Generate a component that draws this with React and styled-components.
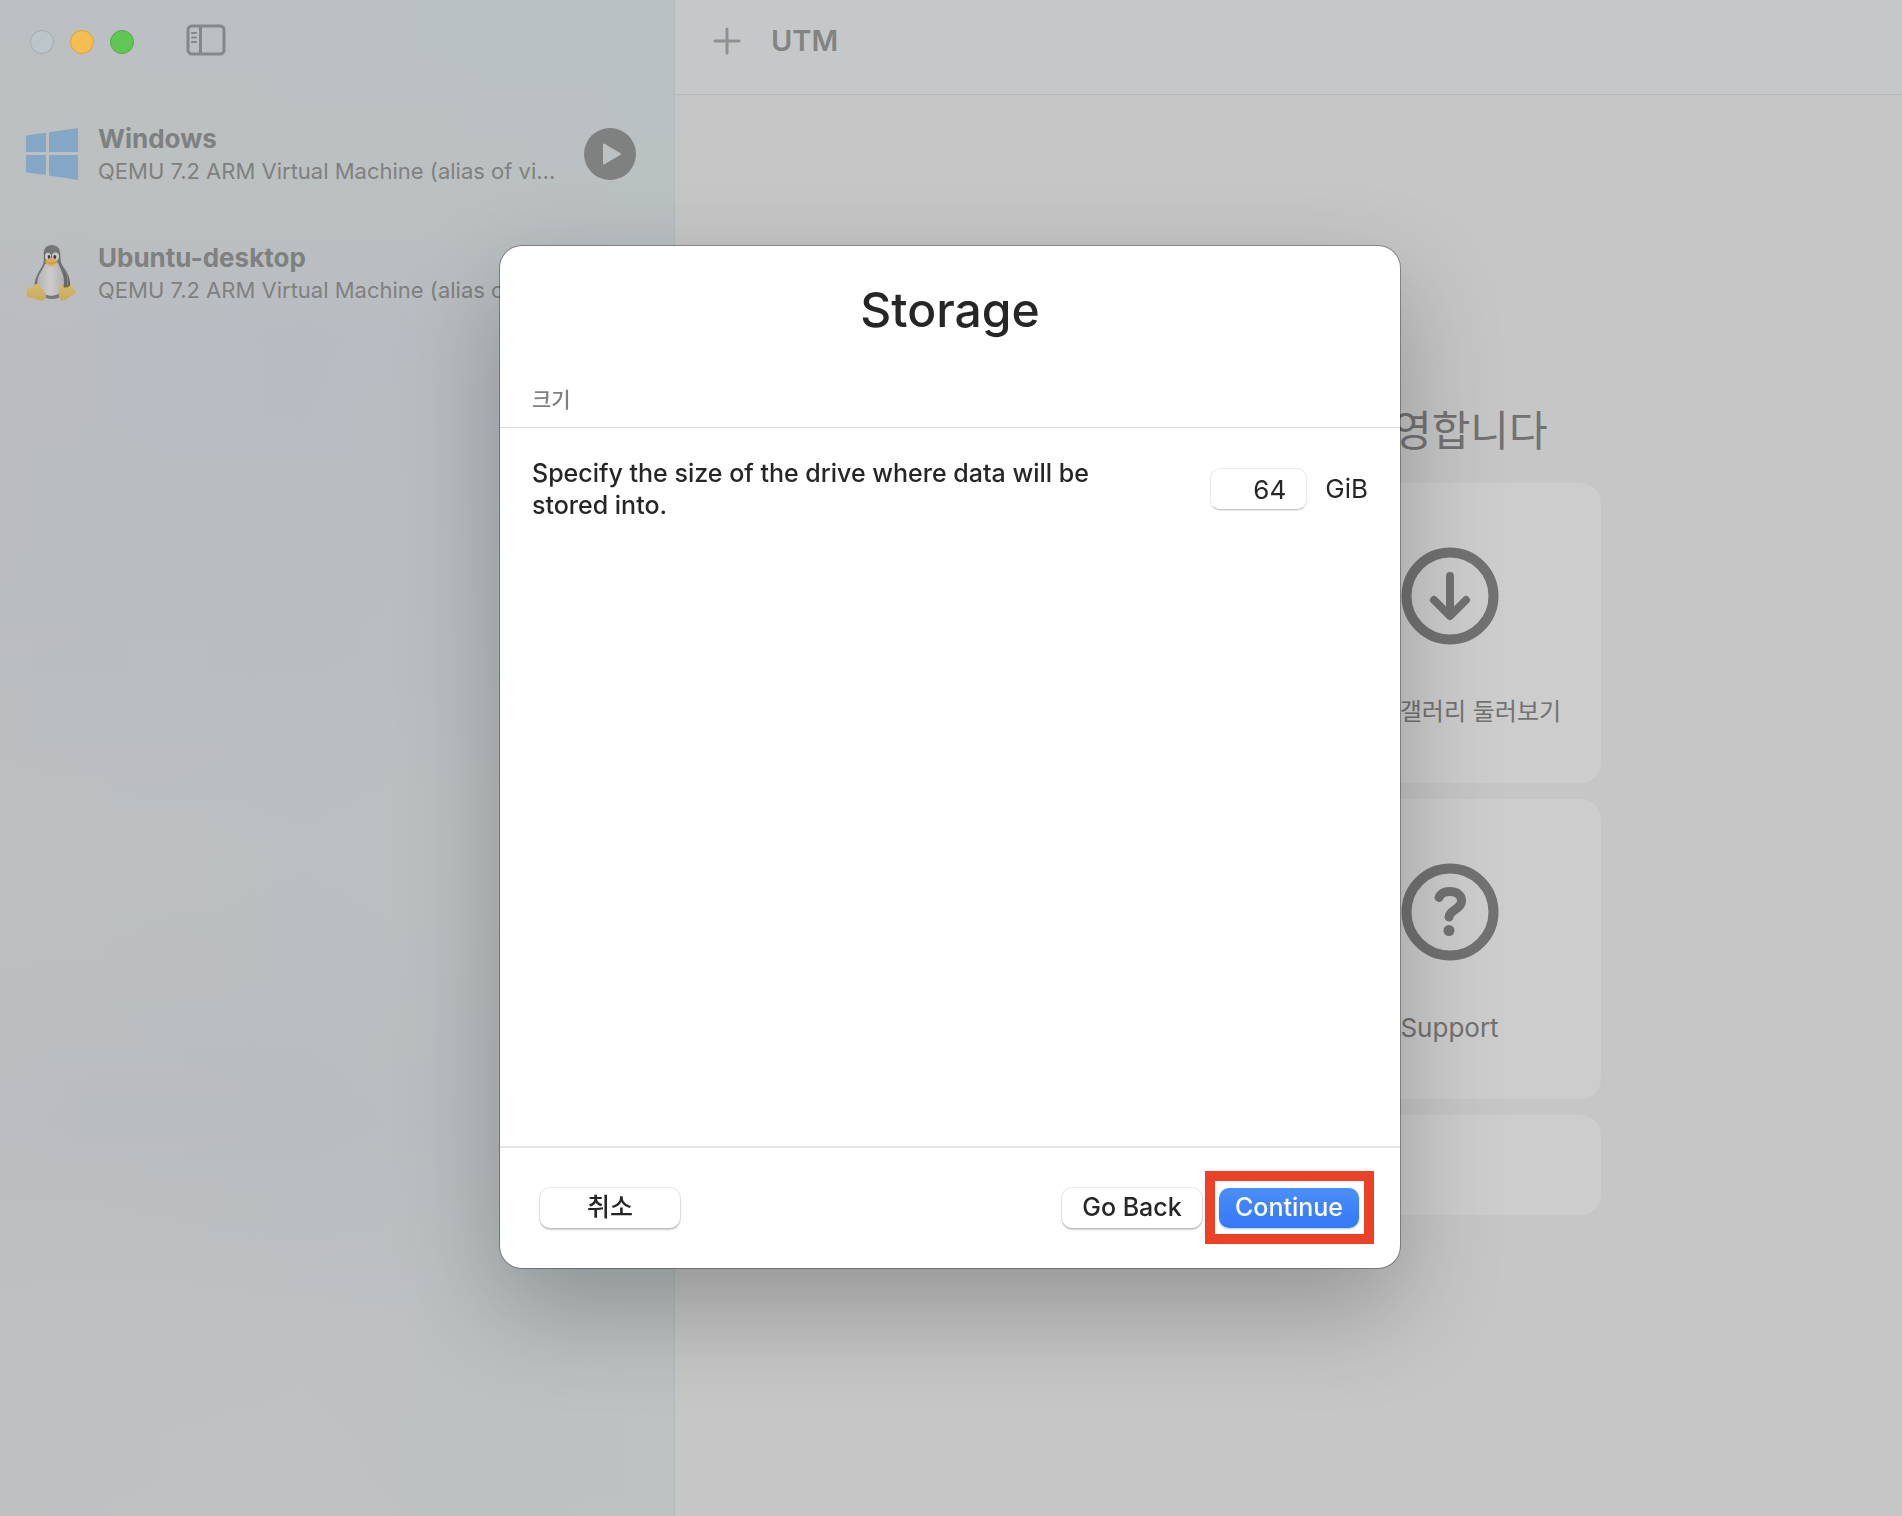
import React from 'react';
import styled, { createGlobalStyle } from 'styled-components';

const GlobalStyle = createGlobalStyle`
  * {
    box-sizing: border-box;
  }

  body {
    margin: 0;
    background: #c6c6c6;
    font-family: Inter, "Noto Sans CJK KR", sans-serif;
  }

  h1, h2, h3, p, ul {
    margin: 0;
    padding: 0;
    font-weight: 400;
  }

  button, input {
    font-family: inherit;
  }
`;

const Window = styled.div`
  display: grid;
  grid-template-columns: minmax(320px, 675px) 1fr;
  min-height: 100vh;
`;

/* sidebar */

const Sidebar = styled.aside`
  min-width: 0;
  border-right: 1px solid #b3b9bc;
  background:
    linear-gradient(
      90deg,
      rgba(192, 190, 190, 0.25) 0%,
      rgba(186, 194, 196, 0) 45%,
      rgba(186, 194, 195, 0.5) 100%
    ),
    linear-gradient(
      180deg,
      #bac0c3 0%,
      #bbc0c0 13%,
      #b8bcc2 22%,
      #b8bdc1 40%,
      #bcbfc1 56%,
      #b9bdc0 74%,
      #bec0c2 88%,
      #bfc1c2 100%
    );
`;

const TitleBar = styled.div`
  display: flex;
  align-items: center;
  height: 84px;
  padding-left: 30px;
`;

const Lights = styled.div`
  display: flex;
  gap: 16px;
`;

const Light = styled.button`
  width: 24px;
  height: 24px;
  padding: 0;
  border: 1px solid ${(props) => props.$edge};
  border-radius: 50%;
  background: ${(props) => props.$fill};
`;

const IconButton = styled.button`
  display: flex;
  padding: 0;
  border: none;
  background: none;
  color: ${(props) => props.$color || '#83898b'};
`;

const ToggleButton = styled(IconButton)`
  margin: 0 0 4px 52px;
`;

const MachineList = styled.ul`
  display: flex;
  flex-direction: column;
  gap: 39px;
  padding: 30px 38px 0 24px;
  list-style: none;
`;

const Machine = styled.li`
  display: flex;
  align-items: center;
  height: 80px;
`;

const MachineText = styled.div`
  flex: 1;
  min-width: 0;
  margin: 0 26px 0 18px;
  padding-top: 2px;
  color: #7f8180;
`;

const MachineName = styled.h3`
  font-size: 26px;
  font-weight: 700;
  line-height: 32px;
`;

const MachineInfo = styled.p`
  overflow: hidden;
  font-size: 22px;
  line-height: 32px;
  white-space: nowrap;
  text-overflow: ellipsis;
`;

/* main area */

const Main = styled.main`
  display: flex;
  flex-direction: column;
  min-width: 0;
`;

const Toolbar = styled.header`
  display: flex;
  align-items: center;
  gap: 30px;
  height: 95px;
  padding: 0 38px 12px;
  border-bottom: 1px solid #b5b8bb;
  background: #c6c7c9;
`;

const WindowTitle = styled.h2`
  font-size: 29px;
  font-weight: 600;
  line-height: 36px;
  color: #828483;
`;

const Welcome = styled.section`
  width: 100%;
  max-width: 624px;
  margin: 0 auto;
  padding-top: 303px;
  color: #727272;
`;

const WelcomeTitle = styled.h1`
  margin-bottom: 20px;
  font-size: 42px;
  line-height: 65px;
  text-align: center;
  white-space: nowrap;
`;

const CardGrid = styled.div`
  display: grid;
  grid-template-columns: 1fr 1fr;
  gap: 16px 20px;
`;

const Card = styled.button`
  display: flex;
  flex-direction: column;
  align-items: center;
  justify-content: space-between;
  height: 300px;
  padding: 64px 0 55px;
  border: none;
  border-radius: 20px;
  background: #cdcdcd;
  color: #727272;
  font-size: ${(props) => props.$size || 24}px;
  line-height: 32px;
`;

const WideCard = styled(Card)`
  grid-column: 1 / -1;
  height: 100px;
  padding: 0;
`;

/* storage sheet */

const Backdrop = styled.div`
  position: fixed;
  inset: 0;
  display: flex;
  justify-content: center;
  align-items: flex-start;
  padding: 246px 2px 0 0;
`;

const Sheet = styled.div`
  display: flex;
  flex-direction: column;
  width: 900px;
  min-height: 1022px;
  border-radius: 22px;
  background: #ffffff;
  color: #262626;
  box-shadow:
    0 0 0 1px rgba(0, 0, 0, 0.3),
    0 40px 100px rgba(0, 0, 0, 0.25);
`;

const SheetTitle = styled.h2`
  padding: 32px 0 44px;
  font-size: 48px;
  font-weight: 500;
  line-height: 64px;
  text-align: center;
`;

const SectionLabel = styled.h3`
  padding: 0 32px 13px;
  border-bottom: 1px solid #dcdcdc;
  font-size: 21px;
  font-weight: 500;
  line-height: 28px;
  color: #808080;
`;

const SizeRow = styled.div`
  display: flex;
  align-items: center;
  gap: 18px;
  padding: 29px 32px;
  font-size: 26px;
  line-height: 32px;
`;

const SizeLabel = styled.label`
  flex: 1;
  padding-right: 60px;
  font-size: 25px;
  font-weight: 500;
`;

const SizeInput = styled.input`
  width: 97px;
  height: 42px;
  padding: 0 20px;
  border: 1px solid #ebebeb;
  border-bottom-color: #c9c9c9;
  border-radius: 10px;
  outline: none;
  background: #ffffff;
  color: inherit;
  font-size: 26px;
  text-align: right;
  box-shadow: 0 1px 1px rgba(0, 0, 0, 0.1);
`;

const SheetFooter = styled.footer`
  display: flex;
  align-items: center;
  gap: 17px;
  height: 122px;
  margin-top: auto;
  padding: 0 41px 0 40px;
  border-top: 2px solid #e5e5e5;
`;

const PushButton = styled.button`
  width: 140px;
  height: 40px;
  padding: 0 0 2px;
  border: none;
  border-radius: 10px;
  background: ${(props) =>
    props.$primary ? 'linear-gradient(#4a8ff8, #3478f6)' : '#ffffff'};
  color: ${(props) => (props.$primary ? '#ffffff' : '#262626')};
  font-size: 25px;
  font-weight: 500;
  line-height: 36px;
  white-space: nowrap;
  box-shadow: ${(props) =>
    props.$primary
      ? '0 1px 2px rgba(52, 120, 246, 0.4)'
      : '0 0 0 1px rgba(0, 0, 0, 0.08), 0 2px 2px rgba(0, 0, 0, 0.2)'};
`;

const Spacer = styled.div`
  flex: 1;
`;

const Highlight = styled.div`
  position: relative;
  display: flex;

  &::after {
    content: '';
    position: absolute;
    inset: -17px -15px -16px -14px;
    border: 10px solid #ea4127;
    pointer-events: none;
  }
`;

function SidebarIcon() {
  return (
    <svg width="40" height="32" viewBox="0 0 40 32" fill="none" stroke="currentColor" strokeLinecap="round">
      <rect x="2" y="2" width="36" height="28" rx="4" strokeWidth="3" />
      <path d="M14.5 2v28" strokeWidth="3" strokeLinecap="butt" />
      <path d="M6 9h4M6 13.500h4M6 18h4" strokeWidth="2" />
    </svg>
  );
}

function PlusIcon() {
  return (
    <svg width="28" height="28" viewBox="0 0 28 28" stroke="currentColor" strokeWidth="3" strokeLinecap="round">
      <path d="M14 2v24M2 14h24" />
    </svg>
  );
}

function WindowsLogo() {
  return (
    <svg width="56" height="52" viewBox="0 0 56 52" fill="#84a7c6">
      <path d="M2 7.500l20-2.800V24H2zM25 4.300L54 0v24H25zM2 27h20v20L2 44.500zM25 27h29v25l-29-4.500z" />
    </svg>
  );
}

function TuxLogo() {
  return (
    <svg width="56" height="58" viewBox="0 0 56 58">
      <defs>
        <linearGradient id="belly" x1="0" x2="1">
          <stop offset="0" stopColor="#b4b4b4" />
          <stop offset="0.5" stopColor="#cbcbcb" />
          <stop offset="1" stopColor="#b0b0b0" />
        </linearGradient>
        <linearGradient id="coat" x1="0" x2="1">
          <stop offset="0" stopColor="#6d6f70" />
          <stop offset="0.6" stopColor="#777979" />
          <stop offset="1" stopColor="#606262" />
        </linearGradient>
        <linearGradient id="foot" x1="0" y1="0" x2="0" y2="1">
          <stop offset="0" stopColor="#d6b968" />
          <stop offset="1" stopColor="#c8a963" />
        </linearGradient>
      </defs>
      <path
        d="M28 1c-6 0-8.500 4-8.300 9.500.2 5 .6 8-2 12.500C14 29 11 34 10.500 41c3 8 9 14 18 14 8 0 15-5 17.500-12 .8-7-2-14-6.500-20-3-4-3-8-3.200-13C36 4.500 33.500 1 28 1z"
        fill="url(#coat)"
      />
      <path
        d="M21 20c-1 4-6 9-7.500 16-1 5 1 9 4.500 12 4.500 5 14 5 19 0 3.500-4 3.500-12 2-17-1-4-4-9-5-12z"
        fill="url(#belly)"
      />
      <path d="M39 23c4 5 5.500 12 4.500 19" fill="none" stroke="#8b8d8e" strokeWidth="1" />
      <ellipse cx="24" cy="12.500" rx="3" ry="3.800" fill="#c8c8c8" />
      <ellipse cx="31.500" cy="12.500" rx="3.500" ry="4" fill="#c8c8c8" />
      <ellipse cx="25" cy="13" rx="1.300" ry="1.900" fill="#3f4142" />
      <ellipse cx="30.800" cy="13" rx="1.500" ry="2" fill="#3f4142" />
      <path d="M21 17.500c2-1.500 4-3.500 6.500-3.500s5 2 6.500 3.200c-1.500 3-4.500 5.300-7 5.300-2.300 0-5-2.300-6-5z" fill="#dcae58" />
      <path d="M22 18c4 2 8 1.500 11.500-.5" fill="none" stroke="#b88b45" strokeWidth="0.800" />
      <path
        d="M12 40c2.500-.7 4 1.300 6 4.500 1.500 2.500 4.500 5 4 8-.4 3-3.500 4.500-6.500 4-4-1-7-3-11-3.300-2-.3-2.400-2-1.800-4 .4-2-.5-4 .7-5 1.500-1 3.600-.2 5-1.200 1.300-.8 1.800-2.500 3.600-3z"
        fill="url(#foot)"
      />
      <path
        d="M36 40c-1.700 4-1 9-1.200 13 .2 3 3.200 4.300 6 3.300 3.200-1.300 5.200-4 8.400-5.500 2-.9 3.200-1.700 2.800-3-.5-1.500-2.500-2-3-4-.4-1.500-.8-3-2.500-3-1.500 3-6.500 4-8 1-.6-1.200-.8-2-2.500-1.800z"
        fill="url(#foot)"
      />
    </svg>
  );
}

function PlayIcon() {
  return (
    <svg width="52" height="52" viewBox="0 0 52 52">
      <circle cx="26" cy="26" r="26" fill="#7f8180" />
      <path d="M20 16.500v19l16-9.500z" fill="#bcc2c3" stroke="#bcc2c3" strokeWidth="2" strokeLinejoin="round" />
    </svg>
  );
}

function RoundIcon({ children }) {
  return (
    <svg width="98" height="98" viewBox="0 0 98 98" fill="none" stroke="currentColor" strokeLinecap="round" strokeLinejoin="round">
      <circle cx="49" cy="49" r="43.500" strokeWidth="10" />
      {children}
    </svg>
  );
}

const machines = [
  { name: 'Windows', logo: <WindowsLogo /> },
  { name: 'Ubuntu-desktop', logo: <TuxLogo /> },
];

function App() {
  return (
    <>
      <GlobalStyle />
      <Window>
        <Sidebar>
          <TitleBar>
            <Lights>
              <Light $fill="#bcc6ca" $edge="#a3adb0" aria-label="Close" />
              <Light $fill="#f6be50" $edge="#dda33f" aria-label="Minimize" />
              <Light $fill="#62c656" $edge="#51ab43" aria-label="Zoom" />
            </Lights>
            <ToggleButton aria-label="Toggle sidebar">
              <SidebarIcon />
            </ToggleButton>
          </TitleBar>
          <MachineList>
            {machines.map((machine) => (
              <Machine key={machine.name}>
                {machine.logo}
                <MachineText>
                  <MachineName>{machine.name}</MachineName>
                  <MachineInfo>QEMU 7.2 ARM Virtual Machine (alias of virt-7.2)</MachineInfo>
                </MachineText>
                <IconButton aria-label={`Run ${machine.name}`}>
                  <PlayIcon />
                </IconButton>
              </Machine>
            ))}
          </MachineList>
        </Sidebar>

        <Main>
          <Toolbar>
            <IconButton $color="#8f9190" aria-label="New">
              <PlusIcon />
            </IconButton>
            <WindowTitle>UTM</WindowTitle>
          </Toolbar>
          <Welcome>
            <WelcomeTitle>UTM에 오신 것을 환영합니다</WelcomeTitle>
            <CardGrid>
              <Card aria-label="New" />
              <Card>
                <RoundIcon>
                  <path d="M49 29v38M33 53l16 16 16-16" strokeWidth="8" />
                </RoundIcon>
                UTM 갤러리 둘러보기
              </Card>
              <Card aria-label="Guide" />
              <Card $size={26}>
                <RoundIcon>
                  <path d="M38 34.500c2-4.500 5.500-6 10.500-6 7 0 12 3.500 12 9 0 9-12 9-12.500 16.500" strokeWidth="9" />
                  <circle cx="48" cy="67.500" r="5.500" fill="currentColor" stroke="none" />
                </RoundIcon>
                Support
              </Card>
              <WideCard aria-label="Server" />
            </CardGrid>
          </Welcome>
        </Main>
      </Window>

      <Backdrop>
        <Sheet role="dialog" aria-labelledby="sheet-title">
          <SheetTitle id="sheet-title">Storage</SheetTitle>
          <SectionLabel>크기</SectionLabel>
          <SizeRow>
            <SizeLabel htmlFor="size">
              Specify the size of the drive where data will be stored into.
            </SizeLabel>
            <SizeInput id="size" type="text" defaultValue="64" />
            <span>GiB</span>
          </SizeRow>
          <SheetFooter>
            <PushButton>취소</PushButton>
            <Spacer />
            <PushButton>Go Back</PushButton>
            <Highlight>
              <PushButton $primary>Continue</PushButton>
            </Highlight>
          </SheetFooter>
        </Sheet>
      </Backdrop>
    </>
  );
}

export default App;
